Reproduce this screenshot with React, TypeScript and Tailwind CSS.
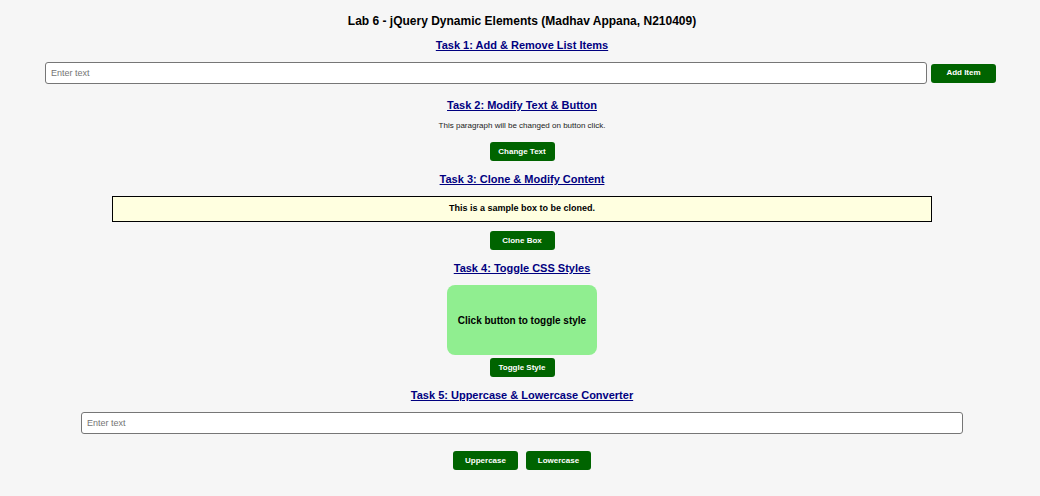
import { useState } from "react";

const btn =
  "h-[19px] w-[65px] rounded-[3px] bg-[#006400] text-[8px] font-bold text-white flex items-center justify-center";
const heading =
  "text-[11px] leading-[14px] font-bold text-[#000080] underline text-center";

export default function App() {
  const [para, setPara] = useState("This paragraph will be changed on button click.");
  const [text, setText] = useState("");
  const [styled, setStyled] = useState(false);

  return (
    <div
      className="min-h-[496px] bg-[#f6f6f6] pl-[4px] flex flex-col items-center text-black"
      style={{ fontFamily: '"Liberation Sans", Arial, sans-serif' }}
    >
      <h1 className="mt-[13px] text-[12px] leading-[16px] font-bold">
        Lab 6 - jQuery Dynamic Elements (Madhav Appana, N210409)
      </h1>

      {/* Task 1 */}
      <h2 className={`mt-[9px] ${heading}`}>Task 1: Add &amp; Remove List Items</h2>
      <div className="mt-[10px] ml-[-3px] flex items-center gap-[4px] w-[951px]">
        <input
          type="text"
          placeholder="Enter text"
          className="h-[22px] w-[882px] rounded-[3px] border border-[#767676] bg-white px-[5px] text-[9px] placeholder-[#757575] outline-none"
        />
        <button type="button" className={btn}>
          Add Item
        </button>
      </div>

      {/* Task 2 */}
      <h2 className={`mt-[14px] ${heading}`}>Task 2: Modify Text &amp; Button</h2>
      <p className="mt-[9px] text-[8px] leading-[10px] text-[#222]">{para}</p>
      <button
        type="button"
        className={`mt-[11px] ${btn}`}
        onClick={() => setPara("The paragraph text has been changed!")}
      >
        Change Text
      </button>

      {/* Task 3 */}
      <h2 className={`mt-[11px] ${heading}`}>Task 3: Clone &amp; Modify Content</h2>
      <div className="mt-[10px] h-[26px] w-[820px] border border-black bg-[#ffffe0] flex items-center justify-center text-[9px] font-bold">
        This is a sample box to be cloned.
      </div>
      <button type="button" className={`mt-[9px] ${btn}`}>
        Clone Box
      </button>

      {/* Task 4 */}
      <h2 className={`mt-[11px] ${heading}`}>Task 4: Toggle CSS Styles</h2>
      <div
        className={`mt-[10px] h-[70px] w-[150px] rounded-[8px] flex items-center justify-center text-[10px] font-bold ${
          styled ? "bg-[#add8e6]" : "bg-[#90ee90]"
        }`}
      >
        Click button to toggle style
      </div>
      <button type="button" className={`mt-[3px] ${btn}`} onClick={() => setStyled(!styled)}>
        Toggle Style
      </button>

      {/* Task 5 */}
      <h2 className={`mt-[11px] ${heading}`}>Task 5: Uppercase &amp; Lowercase Converter</h2>
      <input
        type="text"
        placeholder="Enter text"
        value={text}
        onChange={(e) => setText(e.target.value)}
        className="mt-[10px] h-[22px] w-[882px] rounded-[3px] border border-[#767676] bg-white px-[5px] text-[9px] placeholder-[#757575] outline-none"
      />
      <div className="mt-[17px] flex gap-[8px]">
        <button type="button" className={btn} onClick={() => setText(text.toUpperCase())}>
          Uppercase
        </button>
        <button type="button" className={btn} onClick={() => setText(text.toLowerCase())}>
          Lowercase
        </button>
      </div>
    </div>
  );
}
